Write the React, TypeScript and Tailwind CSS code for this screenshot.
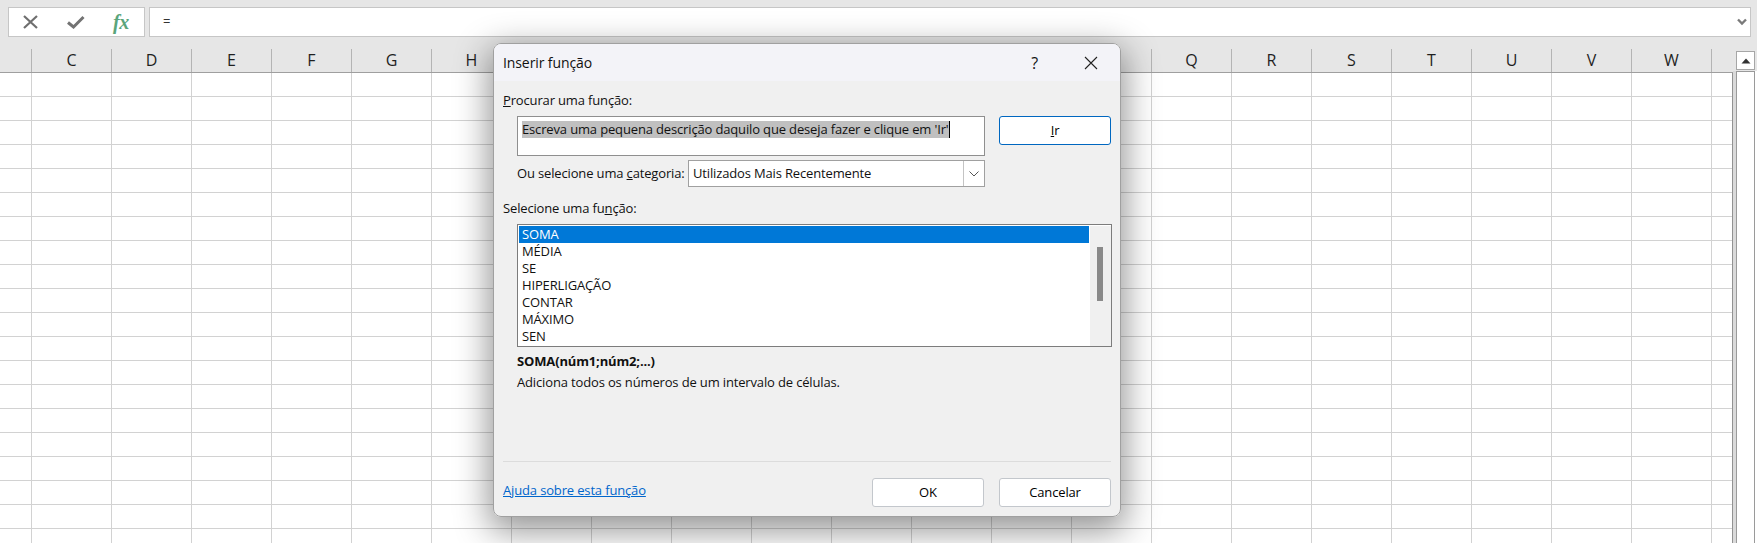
const columns = ["C","D","E","F","G","H","","","","","","","","","Q","R","S","T","U","V","W"];
const rows = Array.from({ length: 20 }, (_, i) => i);
const functions = ["MÉDIA","SE","HIPERLIGAÇÃO","CONTAR","MÁXIMO","SEN"];

function FormulaBar() {
  return (
    <div className="flex h-[49px] items-start gap-[4px] bg-[#e6e6e6] pl-[8px] pr-[6px] pt-[7px]">
      <div className="flex h-[30px] w-[137px] items-center border border-[#c6c6c6] bg-white">
        <svg width="15" height="14" viewBox="0 0 15 14" className="ml-[14px]">
          <path d="M1 1 L14 13 M14 1 L1 13" stroke="#6f6f6f" strokeWidth="2.2" fill="none" />
        </svg>
        <svg width="18" height="14" viewBox="0 0 18 14" className="ml-[29px]">
          <path d="M1 7.5 L6.5 12 L16.5 2" stroke="#737373" strokeWidth="3" fill="none" />
        </svg>
        <span className="ml-[28px] font-['Liberation_Serif'] text-[20px] font-bold italic leading-none tracking-[-0.5px] text-[#5aa57b]">fx</span>
      </div>
      <div className="relative flex h-[30px] flex-1 items-center border border-[#c6c6c6] bg-white pl-[13px] font-['Open_Sans'] text-[13px] text-[#333]">
        =
        <svg width="10" height="8" viewBox="0 0 10 8" className="absolute right-[3px] top-[10px]">
          <path d="M1 1.5 L5 5.5 L9 1.5" stroke="#7a7a7a" strokeWidth="2.4" fill="none" />
        </svg>
      </div>
    </div>
  );
}

function ColumnHeader() {
  return (
    <div className="flex h-[24px] w-[1733px] border-b border-[#9f9f9f] bg-[#e6e6e6]">
      <div className="h-full w-[32px] border-r border-[#b4b4b4]" />
      {columns.map((c, i) => (
        <div key={i} className="flex h-full w-[80px] items-center justify-center border-r border-[#b4b4b4] pb-[1px] font-['Open_Sans'] text-[16px] text-[#1f1f1f]">
          {c}
        </div>
      ))}
    </div>
  );
}

function Sheet() {
  return (
    <div className="w-[1733px] overflow-hidden border-r border-[#929292]">
      {rows.map((r) => (
        <div key={r} className="flex h-[24px] border-b border-[#d2d2d2]">
          <div className="h-full w-[32px] flex-none border-r border-[#d2d2d2]" />
          {columns.map((c, i) => (
            <div key={i} className="h-full w-[80px] flex-none border-r border-[#d2d2d2]" />
          ))}
        </div>
      ))}
    </div>
  );
}

function ScrollBar() {
  return (
    <div className="flex w-[24px] flex-col">
      <div className="h-[22px] bg-[#e6e6e6] pl-[3px] pt-[2px]">
        <div className="flex h-[19px] w-[19px] items-center justify-center border border-[#a6a6a6] bg-white">
          <svg width="10" height="6" viewBox="0 0 10 6"><path d="M5 0.5 L9.5 5.5 L0.5 5.5 Z" fill="#333" /></svg>
        </div>
      </div>
      <div className="flex flex-1">
        <div className="w-[3px] bg-[#dadada]" />
        <div className="w-[19px] border-x border-t border-[#9a9a9a] bg-white" />
      </div>
    </div>
  );
}

function Btn({ children, primary, className }: { children: React.ReactNode; primary?: boolean; className?: string }) {
  return (
    <div className={`flex items-center justify-center rounded-[3px] bg-white text-[13px] text-black ${primary ? "border border-[#0067c0]" : "border border-[#c3c7cc]"} ${className ?? ""}`}>
      {children}
    </div>
  );
}

function Dialog() {
  return (
    <div className="absolute left-[493px] top-[43px] flex h-[474px] w-[628px] flex-col overflow-hidden rounded-[8px] border border-[#a0a0a0] bg-[#f0f0f0] font-['Open_Sans'] text-[13px] tracking-[-0.15px] text-[#111]">
      <div className="flex h-[37px] flex-none items-center bg-[#f3f3f8] pl-[9px]">
        <span className="text-[14px] tracking-[-0.1px]">Inserir função</span>
        <span className="ml-auto mr-[46px] text-[16px]">?</span>
        <svg width="14" height="14" viewBox="0 0 14 14" className="mr-[22px]">
          <path d="M1 1 L13 13 M13 1 L1 13" stroke="#222" strokeWidth="1.1" fill="none" />
        </svg>
      </div>
      <div className="flex flex-1 flex-col pl-[9px] pr-[9px]">
        <div className="mt-[11px] h-[16px] leading-[16px]"><u>P</u>rocurar uma função:</div>
        <div className="mt-[8px] flex gap-[14px] pl-[14px]">
          <div className="h-[40px] w-[468px] border border-[#8f8f8f] bg-white pl-[4px] pt-[3px]">
            <span className="inline-block h-[17px] border-r border-black bg-[#c0c0c0] leading-[17px]">Escreva uma pequena descrição daquilo que deseja fazer e clique em 'Ir'</span>
          </div>
          <Btn primary className="h-[29px] w-[112px]"><u>I</u>r</Btn>
        </div>
        <div className="mt-[4px] flex h-[27px] items-center pl-[14px]">
          <span className="w-[171px]">Ou selecione uma <u>c</u>ategoria:</span>
          <div className="flex h-full w-[297px] items-center border border-[#a0a0a0] bg-white pl-[4px]">
            <span className="flex-1">Utilizados Mais Recentemente</span>
            <div className="flex h-full w-[21px] items-center justify-center border-l border-[#c4c4c4]">
              <svg width="10" height="6" viewBox="0 0 10 6"><path d="M0.5 0.5 L5 5 L9.5 0.5" stroke="#555" strokeWidth="1" fill="none" /></svg>
            </div>
          </div>
        </div>
        <div className="mt-[13px] h-[16px] leading-[16px]">Selecione uma fu<u>n</u>ção:</div>
        <div className="ml-[14px] mt-[8px] flex h-[123px] w-[595px] overflow-hidden border border-[#7c7c7c] bg-white pl-[1px] pt-[1px]">
          <div className="w-[570px] flex-none">
            <div className="h-[17px] bg-[#0078d7] pl-[3px] leading-[17px] text-white">SOMA</div>
            {functions.map((f) => (
              <div key={f} className="h-[17px] pl-[3px] leading-[17px]">{f}</div>
            ))}
          </div>
          <div className="ml-[1px] flex-1 bg-[#f0f0f0] pl-[7px] pt-[21px]">
            <div className="h-[54px] w-[6px] bg-[#8a8a8a]" />
          </div>
        </div>
        <div className="ml-[14px] mt-[6px] h-[16px] font-bold leading-[16px]">SOMA(núm1;núm2;...)</div>
        <div className="ml-[14px] mt-[5px] h-[16px] leading-[16px]">Adiciona todos os números de um intervalo de células.</div>
        <div className="mt-[71px] h-[1px] bg-[#dcdcdc]" />
        <div className="mt-[16px] flex items-start">
          <a className="mt-[4px] leading-[16px] text-[#0066cc] underline">Ajuda sobre esta função</a>
          <Btn className="ml-auto h-[29px] w-[112px]">OK</Btn>
          <Btn className="ml-[15px] h-[29px] w-[112px]">Cancelar</Btn>
        </div>
      </div>
    </div>
  );
}

export default function App() {
  return (
    <div className="relative h-[543px] w-[1757px] overflow-hidden bg-white">
      <FormulaBar />
      <div className="flex h-[494px]">
        <div className="flex-none overflow-hidden">
          <ColumnHeader />
          <Sheet />
        </div>
        <ScrollBar />
      </div>
      <div className="absolute left-[493px] top-[43px] h-[474px] w-[628px] rounded-[8px] shadow-[0_10px_34px_4px_rgba(0,0,0,0.42)]" />
      <Dialog />
    </div>
  );
}
